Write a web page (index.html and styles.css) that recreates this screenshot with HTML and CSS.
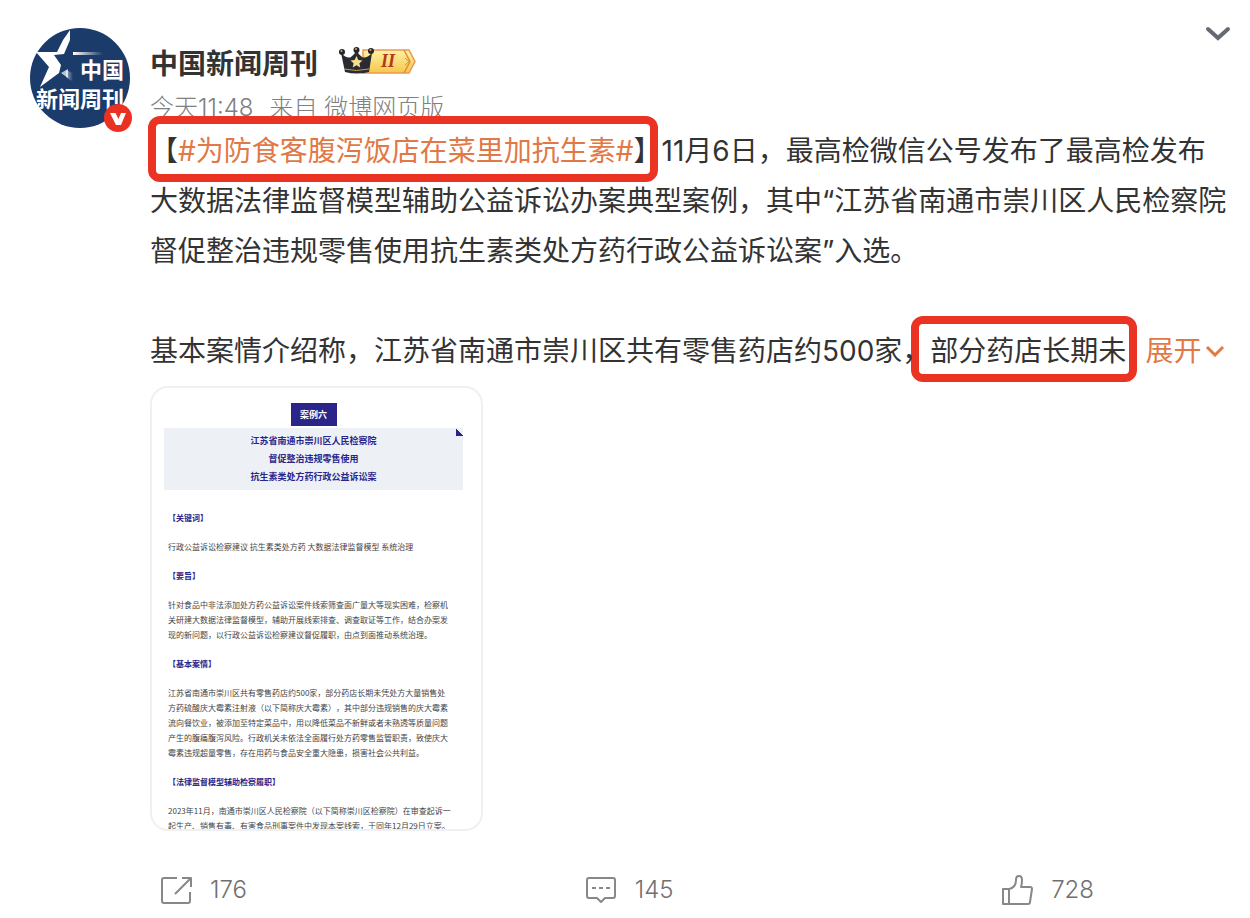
FILE: index.html
```html
<!DOCTYPE html>
<html lang="zh-CN">
<head>
  <meta charset="UTF-8">
  <meta name="viewport" content="width=device-width, initial-scale=1.0">
  <title>中国新闻周刊</title>
  <link rel="stylesheet" href="styles.css">
</head>
<body>
  <article class="post">
    <a href="#" class="avatar" aria-label="中国新闻周刊">
      <svg class="logo" viewBox="0 0 100 100">
        <defs>
          <clipPath id="circle"><circle cx="50" cy="50" r="50"/></clipPath>
          <linearGradient id="trail">
            <stop offset="0" stop-color="#fff"/>
            <stop offset="1" stop-color="#fff" stop-opacity="0"/>
          </linearGradient>
        </defs>
        <g clip-path="url(#circle)">
          <rect width="100" height="100" fill="#1b3b6b"/>
          <path d="M40 2 L40 12 L34 26 L24 27 L31 37 L29 45 L10 59 L19 39 L6 24 L27 24 L33 12 Z" fill="#fff"/>
          <rect x="43" y="24" width="30" height="3" fill="url(#trail)"/>
          <path d="M31 45 L38 41 V50 Z" fill="#fff" opacity="0.7"/>
          <path d="M36 42 L43 45 V54 L36 49 Z" fill="url(#trail)" opacity="0.6"/>
          <text x="50" y="50" class="logo-text">中国</text>
          <text x="6" y="79" class="logo-text">新闻周刊</text>
        </g>
      </svg>
      <svg class="verified" viewBox="0 0 28 28">
        <circle cx="14" cy="14" r="14" fill="#ea3223"/>
        <path d="M6 9 H11.500 L14.500 15 L17 9 H22 L17 21 H12 Z" fill="#fff"/>
      </svg>
    </a>

    <div class="content">
      <header class="head">
        <a href="#" class="name">中国新闻周刊</a>
        <svg class="level" viewBox="0 0 78 30">
          <defs>
            <linearGradient id="gold" x2="0" y2="1">
              <stop offset="0" stop-color="#fff0a6"/>
              <stop offset="1" stop-color="#f6c84c"/>
            </linearGradient>
          </defs>
          <path d="M25 5 H71 L77 16.500 L71 28 H25 Z" fill="url(#gold)" stroke="#e99a50" stroke-width="1.500"/>
          <path d="M66 5 L72 16.500 L66 28" fill="none" stroke="#e38a3a" stroke-width="1.500"/>
          <path d="M67 13 L71 16.500 L67 20" fill="none" stroke="#e38a3a"/>
          <path d="M3 8 Q9 14 13 12 Q17 9 18.500 5 Q20 9 24 12 Q28 14 34 8 L31 27 Q18.500 30 7 27 Z" fill="#2a2a33"/>
          <path d="M6 24 Q18 27 31 24" fill="none" stroke="#cf9c4c"/>
          <g fill="#25232b">
            <circle cx="4" cy="7" r="3"/>
            <circle cx="18.500" cy="5" r="3"/>
            <circle cx="33" cy="6" r="3"/>
          </g>
          <g fill="#d9ad62">
            <circle cx="3.500" cy="6" r="1"/>
            <circle cx="18" cy="4" r="1"/>
            <circle cx="32.500" cy="5" r="1"/>
          </g>
          <path d="M18.500 11 L20.300 15 L24.500 15.400 L21.400 18.200 L22.300 22.500 L18.500 20.300 L14.700 22.500 L15.600 18.200 L12.500 15.400 L16.700 15 Z" fill="#fbdc8a"/>
          <text x="43" y="22" class="level-text">II</text>
        </svg>
      </header>

      <div class="meta">
        <a href="#">今天11:48</a>
        <span>来自 <a href="#">微博网页版</a></span>
      </div>

      <div class="text">
        <p><span class="mark">【<a href="#" class="topic">#为防食客腹泻饭店在菜里加抗生素#</a>】</span>11月6日，最高检微信公号发布了最高检发布大数据法律监督模型辅助公益诉讼办案典型案例，其中“江苏省南通市崇川区人民检察院督促整治违规零售使用抗生素类处方药行政公益诉讼案”入选。</p>
        <p>基本案情介绍称，江苏省南通市崇川区共有零售药店约500家，<span class="mark mark-wide">部分药店长期未</span><button type="button" class="expand">展开<svg viewBox="0 0 20 12"><path d="M2 2 L10 10 L18 2"/></svg></button></p>
      </div>

      <div class="picture">
        <div class="case-no">案例六</div>
        <div class="case-title">
          江苏省南通市崇川区人民检察院<br>
          督促整治违规零售使用<br>
          抗生素类处方药行政公益诉讼案
        </div>
        <div class="case-body">
          <h4>【关键词】</h4>
          <p>行政公益诉讼检察建议 抗生素类处方药 大数据法律监督模型 系统治理</p>
          <h4>【要旨】</h4>
          <p>针对食品中非法添加处方药公益诉讼案件线索筛查面广量大等现实困难，检察机<br>关研建大数据法律监督模型，辅助开展线索排查、调查取证等工作，结合办案发<br>现的新问题，以行政公益诉讼检察建议督促履职，由点到面推动系统治理。</p>
          <h4>【基本案情】</h4>
          <p>江苏省南通市崇川区共有零售药店约500家，部分药店长期未凭处方大量销售处<br>方药硫酸庆大霉素注射液（以下简称庆大霉素），其中部分违规销售的庆大霉素<br>流向餐饮业，被添加至特定菜品中，用以降低菜品不新鲜或者未熟透等质量问题<br>产生的腹痛腹泻风险。行政机关未依法全面履行处方药零售监管职责，致使庆大<br>霉素违规超量零售，存在用药与食品安全重大隐患，损害社会公共利益。</p>
          <h4>【法律监督模型辅助检察履职】</h4>
          <p>2023年11月，南通市崇川区人民检察院（以下简称崇川区检察院）在审查起诉一<br>起生产、销售有毒、有害食品刑事案件中发现本案线索，于同年12月29日立案。</p>
        </div>
      </div>

      <footer class="actions">
        <button type="button" aria-label="转发 176">
          <svg viewBox="0 0 32 30"><path d="M17 3 H4 Q2 3 2 5 V26 Q2 28 4 28 H28 Q30 28 30 26 V17"/><path d="M15 19 L30 4 M22 3 H31 V12"/></svg>
          176
        </button>
        <button type="button" aria-label="评论 145">
          <svg viewBox="0 0 32 30"><path d="M4 3 H28 Q30 3 30 5 V21 Q30 23 28 23 H20 L16 27 L12 23 H4 Q2 23 2 21 V5 Q2 3 4 3 Z"/><path d="M7 13 H11 M14 13 H18 M21 13 H25"/></svg>
          145
        </button>
        <button type="button" aria-label="赞 728">
          <svg viewBox="0 0 32 30"><path d="M2 14 H8 V29 H2 Z"/><path d="M8 14 C13 13 15 9 15 5 Q15 1 18 1 Q21 1 21 5 Q21 9 20 12 H29 Q31 12 31 14 L29 27 Q29 29 27 29 H8"/></svg>
          728
        </button>
      </footer>
    </div>

    <button type="button" class="more" aria-label="更多">
      <svg viewBox="0 0 26 16"><path d="M3 3 L13 12 L23 3"/></svg>
    </button>
  </article>
</body>
</html>
```

FILE: styles.css
```css
/* General Reset */
* {
  margin: 0;
  padding: 0;
  box-sizing: border-box;
}

body {
  font-family: Inter, "Noto Sans CJK SC", sans-serif;
  background-color: #fff;
  color: #333;
}

a {
  color: inherit;
  text-decoration: none;
}

button {
  font: inherit;
  color: inherit;
  background: none;
  border: none;
  cursor: pointer;
}

.post {
  position: relative;
  display: flex;
  gap: 20px;
  padding: 28px 20px 8px 30px;
}

/* Avatar */
.avatar {
  position: relative;
  flex: none;
  width: 100px;
  height: 100px;
}

.logo {
  display: block;
  width: 100%;
}

.logo-text {
  font-size: 22px;
  font-weight: 700;
  fill: #fff;
}

.verified {
  position: absolute;
  right: -2px;
  bottom: -4px;
  width: 28px;
}

.content {
  flex: 1;
  min-width: 0;
  padding-top: 16px;
}

/* Name and time */
.head {
  display: flex;
  align-items: center;
  gap: 20px;
  height: 40px;
}

.name {
  font-size: 28px;
  line-height: 40px;
  font-weight: 700;
}

.level {
  width: 78px;
  margin-bottom: 8px;
}

.level-text {
  font-family: "Liberation Serif", serif;
  font-size: 18px;
  font-weight: bold;
  font-style: italic;
  fill: #b13a1c;
}

.meta {
  display: flex;
  gap: 16px;
  margin-top: 8px;
  font-size: 24px;
  line-height: 32px;
  font-weight: 300;
  color: #808080;
}

/* Post text */
.text {
  position: relative;
  z-index: 0;
  margin-top: 2px;
  font-size: 28px;
  line-height: 50px;
}

.text p + p {
  margin-top: 50px;
}

.topic,
.expand {
  color: #e27845;
}

.mark {
  position: relative;
}

.mark::after {
  content: "";
  position: absolute;
  z-index: -1;
  inset: -18px 4px -14px -2px;
  background: #fff;
  border: 8px solid #ea3323;
  border-radius: 12px;
}

.mark-wide::after {
  left: -19px;
  right: -11px;
}

.expand {
  margin-left: 19px;
}

.expand svg {
  width: 20px;
  margin-left: 4px;
  vertical-align: 4px;
  fill: none;
  stroke: currentColor;
  stroke-width: 3;
}

/* Attached picture */
.picture {
  width: 333px;
  height: 445px;
  margin-top: 10px;
  padding: 15px 18px 0 12px;
  border: 2px solid #f0f0f0;
  border-radius: 18px;
  overflow: hidden;
  font-family: "Noto Sans CJK SC", sans-serif;
  font-size: 8px;
  line-height: 15px;
  text-spacing-trim: space-all;
  color: #444;
}

.case-no {
  width: 46px;
  margin: 0 auto 2px;
  background: #2b2589;
  color: #fff;
  font-size: 9px;
  line-height: 23px;
  font-weight: 700;
  text-align: center;
}

.case-title {
  padding: 4px 0;
  background: linear-gradient(to top right, #2b2589 50%, transparent 50%) right top / 7px 8px no-repeat #edf1f6;
  color: #2b2589;
  font-size: 9px;
  line-height: 18px;
  font-weight: 700;
  text-align: center;
}

.case-body {
  padding: 20px 0 0 4px;
  white-space: nowrap;
}

.case-body h4 {
  font-size: 8px;
  font-weight: 700;
  color: #2b2589;
}

.case-body h4,
.case-body p {
  margin-bottom: 14px;
}

/* Bottom bar */
.actions {
  display: grid;
  grid-template-columns: 51fr 50fr auto;
  margin-top: 39px;
  padding: 0 136px 0 10px;
}

.actions button {
  display: flex;
  align-items: center;
  gap: 18px;
  font-size: 24px;
  line-height: 40px;
  font-weight: 300;
  color: #707070;
}

.actions svg {
  width: 32px;
  fill: none;
  stroke: #888;
  stroke-width: 2;
  stroke-linejoin: round;
}

.more {
  position: absolute;
  top: 26px;
  right: 19px;
}

.more svg {
  display: block;
  width: 26px;
  fill: none;
  stroke: #666b73;
  stroke-width: 4;
  stroke-linecap: round;
}
```
